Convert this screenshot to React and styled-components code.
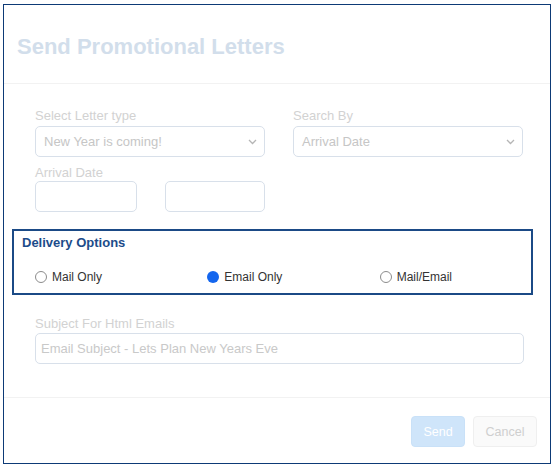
import React from 'react';
import styled, { createGlobalStyle } from 'styled-components';

const GlobalStyle = createGlobalStyle`
  html, body {
    margin: 0;
    padding: 0;
    background: #ffffff;
    font-family: "Liberation Sans", Arial, sans-serif;
  }
`;

const Page = styled.div`
  padding: 4px 0 0 3px;
`;

const Modal = styled.div`
  box-sizing: border-box;
  width: 548px;
  height: 460px;
  border: 1px solid #0d3a76;
  background: #fff;
  display: flex;
  flex-direction: column;
`;

const Header = styled.div`
  padding: 29px 13px 23px;
  border-bottom: 1px solid #f2f2f2;
`;

const Title = styled.h1`
  margin: 0;
  font-size: 22px;
  line-height: 26px;
  font-weight: bold;
  color: #d2deeb;
`;

const Body = styled.div`
  flex: 1;
  padding: 24px 17px 0 8px;
`;

const Fields = styled.div`
  padding: 0 9px 0 23px;
`;

const Grid = styled.div`
  display: grid;
  grid-template-columns: 230px 230px;
  column-gap: 28px;
`;

const Field = styled.div`
  display: flex;
  flex-direction: column;
  margin-top: ${p => p.$top || 0}px;
`;

const Label = styled.label`
  font-size: 13px;
  line-height: 16px;
  color: #d2d2d2;
  margin-bottom: ${p => p.$gap || 0}px;
`;

const SelectBox = styled.div`
  box-sizing: border-box;
  height: 31px;
  border: 1px solid #d8e0ea;
  border-radius: 5px;
  display: flex;
  align-items: center;
  justify-content: space-between;
  padding: 0 7px 0 8px;
  font-size: 13px;
  color: #c6c6c6;
`;

const DateRow = styled.div`
  display: flex;
  gap: 28px;
`;

const TextBox = styled.div`
  box-sizing: border-box;
  height: 31px;
  width: ${p => p.$w ? `${p.$w}px` : '100%'};
  border: 1px solid #d8e0ea;
  border-radius: 5px;
  padding: 0 5px;
  display: flex;
  align-items: center;
  font-size: 13px;
  color: #c9c9c9;
`;

const Options = styled.fieldset`
  box-sizing: border-box;
  margin: 17px 0 0;
  height: 66px;
  border: 2px solid #1b4a86;
  padding: 4px 0 8px;
  display: flex;
  flex-direction: column;
`;

const OptionsTitle = styled.div`
  padding-left: 8px;
  font-size: 13px;
  line-height: 16px;
  font-weight: bold;
  color: #1c4c8a;
`;

const RadioRow = styled.div`
  margin-top: 18px;
  display: grid;
  grid-template-columns: repeat(3, 1fr);
`;

const RadioItem = styled.label`
  display: flex;
  align-items: center;
  gap: 5px;
  padding-left: 21px;
  height: 16px;
  font-size: 12px;
  color: #333333;
`;

const RadioDot = styled.span`
  box-sizing: border-box;
  width: 12px;
  height: 12px;
  border-radius: 50%;
  border: ${p => p.$on ? 'none' : '1px solid #8c8c8c'};
  background: ${p => p.$on ? '#1466ee' : '#fff'};
`;

const Footer = styled.div`
  border-top: 1px solid #f2f2f2;
  padding: 18px 13px 16px;
  display: flex;
  justify-content: flex-end;
  gap: 8px;
`;

const Button = styled.button`
  box-sizing: border-box;
  height: 31px;
  width: ${p => p.$w}px;
  border-radius: 4px;
  font-family: inherit;
  font-size: 12.5px;
  border: 1px solid ${p => p.$primary ? '#c9e1f8' : '#efefef'};
  background: ${p => p.$primary ? '#cfe5fa' : '#fafafa'};
  color: ${p => p.$primary ? '#ffffff' : '#cfcfcf'};
`;

function Chevron() {
  return (
    <svg width="9" height="6" viewBox="0 0 9 6">
      <path d="M1 1l3.5 3.5L8 1" fill="none" stroke="#b5b5b5" strokeWidth="1.3" />
    </svg>
  );
}

function Radio({ label, checked }) {
  return (
    <RadioItem>
      <RadioDot $on={checked} />
      {label}
    </RadioItem>
  );
}

export default function App() {
  return (
    <Page>
      <GlobalStyle />
      <Modal>
        <Header>
          <Title>Send Promotional Letters</Title>
        </Header>
        <Body>
          <Fields>
            <Grid>
              <Field>
                <Label $gap={2}>Select Letter type</Label>
                <SelectBox>
                  <span>New Year is coming!</span>
                  <Chevron />
                </SelectBox>
              </Field>
              <Field>
                <Label $gap={2}>Search By</Label>
                <SelectBox>
                  <span>Arrival Date</span>
                  <Chevron />
                </SelectBox>
              </Field>
              <Field $top={8}>
                <Label>Arrival Date</Label>
                <DateRow>
                  <TextBox $w={102} />
                  <TextBox $w={100} />
                </DateRow>
              </Field>
            </Grid>
          </Fields>
          <Options>
            <OptionsTitle>Delivery Options</OptionsTitle>
            <RadioRow>
              <Radio label="Mail Only" />
              <Radio label="Email Only" checked />
              <Radio label="Mail/Email" />
            </RadioRow>
          </Options>
          <Fields>
            <Field $top={21}>
              <Label $gap={1}>Subject For Html Emails</Label>
              <TextBox>Email Subject - Lets Plan New Years Eve</TextBox>
            </Field>
          </Fields>
        </Body>
        <Footer>
          <Button $primary $w={54}>Send</Button>
          <Button $w={64}>Cancel</Button>
        </Footer>
      </Modal>
    </Page>
  );
}
